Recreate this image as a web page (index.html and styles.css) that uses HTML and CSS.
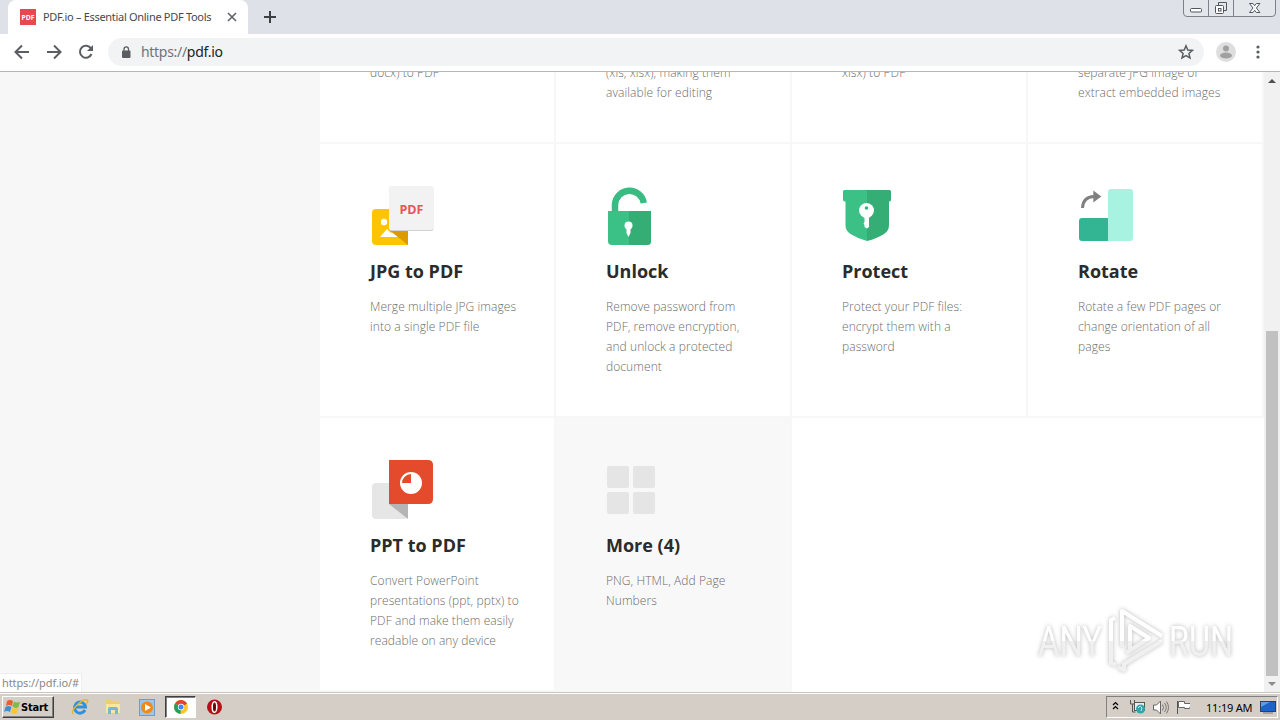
FILE: index.html
```html
<!DOCTYPE html>
<html lang="en">
<head>
    <meta charset="UTF-8">
    <meta name="viewport" content="width=device-width, initial-scale=1.0">
    <title>PDF.io – Essential Online PDF Tools</title>
    <link rel="stylesheet" href="styles.css">
</head>
<body>
    <div class="desktop">

        <!-- Tab strip -->
        <div class="tab-strip">
            <div class="tab">
                <svg class="favicon" width="16" height="16" viewBox="0 0 16 16">
                    <rect width="16" height="16" fill="#e8484f"/>
                    <text x="8" y="11" text-anchor="middle" textLength="13" lengthAdjust="spacingAndGlyphs" class="favicon-text">PDF</text>
                </svg>
                <span class="tab-title">PDF.io – Essential Online PDF Tools</span>
                <svg class="tab-close" width="10" height="10" viewBox="0 0 10 10"><path d="M1 1l8 8M9 1l-8 8" stroke="#5f6368" stroke-width="1.6"/></svg>
            </div>
            <svg class="new-tab" width="12" height="12" viewBox="0 0 12 12"><path d="M6 0v12M0 6h12" stroke="#3c4043" stroke-width="2"/></svg>
            <svg class="window-controls" width="94" height="17" viewBox="0 0 94 17" fill="none" stroke="#7c828c">
                <path d="M.5 0v13q0 3.500 3.500 3.500h85q3.500 0 3.500-3.500v-13M25.500 0v16M50.500 0v16" fill="#e3e6eb"/>
                <g stroke="#50555e">
                    <rect x="7.500" y="8.500" width="11" height="3.500" rx="1" fill="#fff"/>
                    <path d="M35.500 5.500v-3h8v8h-3"/>
                    <rect x="32.500" y="5.500" width="8" height="8" rx="1" fill="#fff"/>
                    <rect x="35.500" y="8.500" width="2.500" height="2.500"/>
                    <path d="M66.500 3.500h3.500l1.700 2.200 1.700-2.200h3.500l-3.500 4.500 3.500 4.500h-3.500l-1.700-2.200-1.700 2.200h-3.500l3.500-4.500z" fill="#fff"/>
                </g>
            </svg>
        </div>

        <!-- Toolbar -->
        <div class="toolbar">
            <svg width="96" height="20" viewBox="0 0 96 20" fill="none" stroke="#5a5e63" stroke-width="2">
                <path d="M29 10H16M22 3.500L15.500 10l6.500 6.500"/>
                <path d="M47 10h13M54 3.500l6.500 6.500-6.500 6.500"/>
                <path d="M91 6.500A6 6 0 1 0 91.500 12"/>
                <path d="M93 3v6h-6z" fill="#5a5e63" stroke="none"/>
            </svg>
            <div class="address-bar">
                <svg width="10" height="12" viewBox="0 0 10 12"><rect x="1" y="4.500" width="8.500" height="7.500" rx="1" fill="#5a5e63"/><path d="M3 5V3.200a2.250 2.250 0 0 1 4.500 0V5" fill="none" stroke="#5a5e63" stroke-width="1.300"/></svg>
                <span class="url"><span class="scheme">https://</span>pdf.io</span>
                <svg class="star" width="16" height="16" viewBox="0 0 16 16"><path d="M8 1.800l1.800 4.200 4.600.400-3.500 3 1.100 4.500L8 11.500l-4 2.400 1.100-4.500-3.500-3 4.600-.400z" fill="none" stroke="#5a5e63" stroke-width="1.500"/></svg>
            </div>
            <svg class="avatar" width="20" height="20" viewBox="0 0 20 20"><circle cx="10" cy="10" r="10" fill="#dedede"/><circle cx="10" cy="6.500" r="3" fill="#a0a0a0"/><ellipse cx="10" cy="13.500" rx="6" ry="3" fill="#a0a0a0"/></svg>
            <svg class="menu" width="4" height="14" viewBox="0 0 4 14" fill="#5a5e63"><circle cx="2" cy="2" r="1.600"/><circle cx="2" cy="7" r="1.600"/><circle cx="2" cy="12" r="1.600"/></svg>
        </div>

        <!-- Page -->
        <div class="page">
            <div class="sidebar"></div>
            <div class="tools">
                <div class="tool tool-cut"><p>docx) to PDF</p></div>
                <div class="tool tool-cut"><p>(xls, xlsx), making them<br>available for editing</p></div>
                <div class="tool tool-cut"><p>xlsx) to PDF</p></div>
                <div class="tool tool-cut"><p>separate JPG image or<br>extract embedded images</p></div>

                <div class="tool">
                    <svg width="66" height="66" viewBox="0 0 66 66">
                        <rect x="2" y="25" width="36" height="36" rx="4" fill="#fdc400"/>
                        <path d="M30 53h8v8h-8z" fill="#fdc400"/>
                        <circle cx="14" cy="38" r="3.200" fill="#fff"/>
                        <path d="M10 53l7-8 4 4 3-2 7 6z" fill="#fff"/>
                        <path d="M19 46h19v15z" fill="#dc9a00"/>
                        <rect x="19.300" y="2.500" width="44" height="44.500" rx="2" fill="#d2d2d2"/>
                        <rect x="19" y="2" width="44" height="44" rx="2" fill="#f2f2f2"/>
                        <text x="41.500" y="30" text-anchor="middle" textLength="24" lengthAdjust="spacingAndGlyphs" class="icon-text">PDF</text>
                    </svg>
                    <h2>JPG to PDF</h2>
                    <p>Merge multiple JPG images<br>into a single PDF file</p>
                </div>
                <div class="tool">
                    <svg width="66" height="66" viewBox="0 0 66 66">
                        <path d="M9 28V20.500A14.500 14.500 0 0 1 37.800 19" fill="none" stroke="#3abb83" stroke-width="6.500"/>
                        <path d="M2 27h43v30q0 4-4 4H6q-4 0-4-4z" fill="#3bc086"/>
                        <path d="M23 27h22v30q0 4-4 4H23z" fill="#35ae76"/>
                        <circle cx="22.500" cy="41.500" r="4" fill="#fff"/>
                        <path d="M20.500 43h4v6l-2 4-2-4z" fill="#fff"/>
                    </svg>
                    <h2>Unlock</h2>
                    <p>Remove password from<br>PDF, remove encryption,<br>and unlock a protected<br>document</p>
                </div>
                <div class="tool">
                    <svg width="66" height="66" viewBox="0 0 66 66">
                        <path d="M25 6H2.500Q1 6 1 7.500V16q0 1.500 2.500 1.500V41q0 6 5 9 7 4.500 16.500 7z" fill="#3bc086"/>
                        <path d="M25 6h22.500q1.500 0 1.500 1.500V16q0 1.500-2 1.500V41q0 6-5 9-7 4.500-17 7z" fill="#35ae76"/>
                        <path d="M22.500 32h4.500v11l-2 1.500-2.500-1.500v-2l-1-1.500 1-1.500z" fill="#fff"/>
                        <circle cx="24.500" cy="26.500" r="7.500" fill="#fff"/>
                        <circle cx="24.500" cy="24" r="1.800" fill="#37b57c"/>
                    </svg>
                    <h2>Protect</h2>
                    <p>Protect your PDF files:<br>encrypt them with a<br>password</p>
                </div>
                <div class="tool">
                    <svg width="66" height="66" viewBox="0 0 66 66">
                        <rect x="1" y="34" width="31" height="23" rx="3" fill="#33b593"/>
                        <path d="M30 8q0-3 3-3h19q3 0 3 3v46q0 3-3 3H30z" fill="#a7f2e1"/>
                        <path d="M4.500 24Q5 13 16 12.500" fill="none" stroke="#808080" stroke-width="3"/>
                        <path d="M15.300 6.500l8 6-8 6z" fill="#808080"/>
                    </svg>
                    <h2>Rotate</h2>
                    <p>Rotate a few PDF pages or<br>change orientation of all<br>pages</p>
                </div>

                <div class="tool">
                    <svg width="66" height="66" viewBox="0 0 66 66">
                        <rect x="2" y="25" width="36" height="36" rx="4" fill="#e6e6e6"/>
                        <path d="M19 46h19v15z" fill="#b5b5b5"/>
                        <path d="M19 2h39q5 0 5 5v34q0 5-5 5H19z" fill="#e44b2c"/>
                        <circle cx="41" cy="25" r="11" fill="#fff"/>
                        <path d="M41 25v-9a9 9 0 0 0-9 9z" fill="#e44b2c"/>
                    </svg>
                    <h2>PPT to PDF</h2>
                    <p>Convert PowerPoint<br>presentations (ppt, pptx) to<br>PDF and make them easily<br>readable on any device</p>
                </div>
                <div class="tool tool-more">
                    <svg width="66" height="66" viewBox="0 0 66 66" fill="#e5e5e5">
                        <rect x="1" y="8" width="22" height="22" rx="2"/>
                        <rect x="27" y="8" width="22" height="22" rx="2"/>
                        <rect x="1" y="34" width="22" height="22" rx="2"/>
                        <rect x="27" y="34" width="22" height="22" rx="2"/>
                    </svg>
                    <h2>More (4)</h2>
                    <p>PNG, HTML, Add Page<br>Numbers</p>
                </div>
            </div>
            <div class="scrollbar">
                <svg width="8" height="4" viewBox="0 0 8 4"><path d="M0 4l4-4 4 4z" fill="#505050"/></svg>
                <div class="thumb"></div>
                <svg width="8" height="4" viewBox="0 0 8 4"><path d="M0 0l4 4 4-4z" fill="#8a8a8a"/></svg>
            </div>
            <div class="status">https://pdf.io/#</div>
            <svg class="watermark" width="204" height="70" viewBox="0 0 204 70">
                <defs>
                    <linearGradient id="shade" gradientUnits="userSpaceOnUse" x1="0" y1="0" x2="0" y2="70">
                        <stop offset=".5" stop-color="#fff"/>
                        <stop offset=".5" stop-color="#f0f0f0"/>
                    </linearGradient>
                </defs>
                <text x="6" y="50" textLength="64" lengthAdjust="spacingAndGlyphs">ANY</text>
                <text x="137" y="50" textLength="64" lengthAdjust="spacingAndGlyphs">RUN</text>
                <g fill="none" stroke="url(#shade)" stroke-width="4" stroke-linejoin="round">
                    <path d="M90 41V5l40 25"/>
                    <path d="M98 43V20l19 12-23 15"/>
                    <path d="M83 12l-4 2v43l5 2M130 35L92 58v6l-6-3"/>
                </g>
            </svg>
        </div>

        <!-- Taskbar -->
        <div class="taskbar">
            <div class="start">
                <svg width="17" height="16" viewBox="0 0 17 16">
                    <path d="M3 2q3-2 6 0L8 7Q5 5 2 7z" fill="#e8622c"/>
                    <path d="M10 2.500q3 2 6 0L14.500 8q-3 2-6-.500z" fill="#7dbb42"/>
                    <path d="M1.500 8q3-2 6 0l-1.500 5q-3-2-6 0z" fill="#3f8fd6"/>
                    <path d="M8.500 8.500q3 2 6 0L13 14q-3 2-6-.500z" fill="#f8c62f"/>
                </svg>
                <span>Start</span>
            </div>
            <svg class="ie" width="18" height="18" viewBox="0 0 18 18">
                <path d="M14 12a5.500 5.500 0 1 1 .500-3H5" fill="none" stroke="#2f91dc" stroke-width="3"/>
                <path d="M2 16C-1 12 12 0 16 2q2 1-1 4" fill="none" stroke="#e6b52c" stroke-width="1.400"/>
            </svg>
            <svg class="folder" width="18" height="18" viewBox="0 0 18 18">
                <path d="M2 2h6l1 1h6v12H2z" fill="#efcf68"/>
                <path d="M2 6h14v9H2z" fill="#f8e7a0"/>
                <path d="M4 16v-5q0-2 2-2h6q2 0 2 2v5h-3v-4H7v4z" fill="#74b7df"/>
            </svg>
            <svg class="player" width="16" height="17" viewBox="0 0 16 17">
                <rect x=".5" y=".5" width="15" height="16" fill="#9bc6ea" stroke="#6a9ecb"/>
                <circle cx="8" cy="8.500" r="6" fill="#f0881c"/>
                <path d="M6 5l6 3.500L6 12z" fill="#fff"/>
            </svg>
            <div class="task-active">
                <svg width="14" height="14" viewBox="0 0 14 14">
                    <circle cx="7" cy="7" r="7" fill="#fbc62f"/>
                    <path d="M7 7L1 3.500a7 7 0 0 1 12 0z" fill="#dc4437"/>
                    <path d="M7 7L1 3.500A7 7 0 0 0 6.500 14z" fill="#1fa05e"/>
                    <path d="M7 3.500h6L7 7z" fill="#dc4437"/>
                    <circle cx="7" cy="7" r="3.200" fill="#fff"/>
                    <circle cx="7" cy="7" r="2.500" fill="#4285f4"/>
                </svg>
            </div>
            <svg class="opera" width="15" height="16" viewBox="0 0 15 16">
                <circle cx="7.500" cy="8" r="7.500" fill="#b31219"/>
                <ellipse cx="7.500" cy="8" rx="2.300" ry="5.300" fill="#6d070b" stroke="#fff" stroke-width="1.500"/>
            </svg>
            <div class="tray">
                <svg width="78" height="18" viewBox="0 0 78 18" fill="none">
                    <path d="M1 7l2.500-2.500L6 7M1 11l2.500-2.500L6 11" stroke="#000" stroke-width="1.200"/>
                    <path d="M18.500 2v4h4V2M20.500 6v8h3" stroke="#555"/>
                    <rect x="22.500" y="4.500" width="10" height="8" fill="#e8edf0" stroke="#555"/>
                    <circle cx="28.500" cy="11" r="4.500" fill="#32a5ac"/>
                    <path d="M26 10l2-2 2 2-1 3" stroke="#b8ebe8"/>
                    <path d="M41.500 7v5h3l4 4V3l-4 4z" fill="#fff" stroke="#666"/>
                    <path d="M50.500 6.500q2 3 0 6M52.500 5q3.500 4.500 0 9M54.500 3.500q4 6 0 12" stroke="#777"/>
                    <path d="M65.500 3v13" stroke="#555"/>
                    <path d="M66.500 3.500h6v2h7l-2 5h-5v-1h-6z" fill="#fff" stroke="#666"/>
                </svg>
                <span class="clock">11:19 AM</span>
                <svg width="16" height="13" viewBox="0 0 16 13"><rect x=".5" y=".5" width="15" height="10" fill="#1e62cc" stroke="#333f55"/><path d="M1 1h9L1 6z" fill="#5b9bec"/><path d="M3 12h10" stroke="#777"/></svg>
            </div>
        </div>
    </div>
</body>
</html>
```
FILE: styles.css
```css
body {
    margin: 0;
    font-family: "Open Sans", sans-serif;
    background-color: #fff;
}
svg {
    display: block;
    flex-shrink: 0;
}
.desktop {
    display: flex;
    flex-direction: column;
    width: 1280px;
    height: 720px;
    overflow: hidden;
}

/* Tab strip */
.tab-strip {
    display: flex;
    height: 34px;
    background-color: #dee1e8;
}
.tab {
    display: flex;
    align-items: center;
    box-sizing: border-box;
    width: 240px;
    margin-left: 8px;
    padding-left: 12px;
    background-color: #fff;
    border-radius: 8px 8px 0 0;
}
.favicon-text {
    font: bold 7.5px "Open Sans", sans-serif;
    fill: #fff;
}
.tab-title {
    width: 169px;
    margin-left: 7px;
    padding-bottom: 1px;
    font-family: "Noto Sans", sans-serif;
    font-size: 11px;
    letter-spacing: -0.3px;
    white-space: nowrap;
    color: #45494d;
}
.tab-close {
    margin-left: 15px;
}
.new-tab {
    margin: 11px 0 0 16px;
}
.window-controls {
    margin-left: auto;
    margin-right: 3px;
}

/* Toolbar */
.toolbar {
    display: flex;
    align-items: center;
    box-sizing: border-box;
    height: 38px;
    padding-bottom: 1px;
    border-bottom: 1px solid #b3b6b6;
}
.address-bar {
    display: flex;
    align-items: center;
    box-sizing: border-box;
    width: 1096px;
    height: 28px;
    margin-left: 12px;
    padding: 0 10px 0 13px;
    border-radius: 14px;
    background-color: #f1f3f4;
}
.url {
    margin-left: 10px;
    padding-bottom: 1px;
    font-family: "Noto Sans", sans-serif;
    font-size: 14px;
    letter-spacing: -0.3px;
    color: #202124;
}
.scheme {
    color: #6f7479;
}
.star {
    margin-left: auto;
}
.avatar {
    margin-left: 12px;
}
.menu {
    margin-left: 20px;
}

/* Page */
.page {
    position: relative;
    display: flex;
    height: 620px;
    overflow: hidden;
}
.sidebar {
    width: 320px;
    background-color: #f7f7f7;
}
.tools {
    display: grid;
    grid-template-columns: repeat(4, 236px);
    grid-template-rows: 72px 274px 274px;
}
.tool {
    box-sizing: border-box;
    padding: 40px 0 0 50px;
    border-right: 2px solid #f7f7f7;
    border-bottom: 2px solid #f7f7f7;
}
/* first row is scrolled partly out of view */
.tool-cut {
    padding-top: 0;
}
.tool-cut p {
    margin-top: -9px;
}
.tool-more {
    background-color: #f8f8f8;
}
.tool h2 {
    margin: 8px 0 0;
    font-size: 18px;
    line-height: 26px;
    font-weight: 700;
    color: #2b2b2b;
}
.tool p {
    margin-bottom: 0;
    font-size: 12px;
    font-weight: 300;
    line-height: 20px;
    letter-spacing: 0.08px;
    white-space: nowrap;
    color: #6c6c6c;
}
.tool h2 + p {
    margin-top: 13px;
}
.icon-text {
    font: bold 12px "Open Sans", sans-serif;
    fill: #e5555a;
}
.scrollbar {
    display: flex;
    flex-direction: column;
    align-items: center;
    box-sizing: border-box;
    width: 16px;
    padding: 7px 0 6px;
    background-color: #f1f1f1;
}
.thumb {
    width: 12px;
    height: 345px;
    margin-top: auto;
    margin-bottom: 6px;
    background-color: #c1c1c1;
}
.status {
    position: absolute;
    left: 0;
    bottom: 0;
    width: 79px;
    height: 18px;
    padding-left: 2px;
    background-color: #fff;
    border-top: 1px solid #eee;
    border-right: 1px solid #eee;
    font-family: "Noto Sans", sans-serif;
    font-size: 11px;
    line-height: 17px;
    letter-spacing: -0.1px;
    color: #888;
}
.watermark {
    position: absolute;
    left: 1032px;
    top: 534px;
    filter: drop-shadow(0 0 2px rgba(0, 0, 0, 0.28));
}
.watermark text {
    font: 42px Roboto, sans-serif;
    fill: url(#shade);
}

/* Taskbar */
.taskbar {
    display: flex;
    align-items: center;
    box-sizing: border-box;
    height: 28px;
    padding-top: 1px;
    border-top: 1px solid #c9c5bd;
    background-color: #d5cec6;
    box-shadow: inset 0 1px #fff;
}
.start {
    display: flex;
    align-items: center;
    box-sizing: border-box;
    width: 52px;
    height: 22px;
    margin-left: 2px;
    padding-left: 1px;
    border: 1px solid;
    border-color: #fff #404040 #404040 #fff;
    box-shadow: inset -1px -1px #808080;
    font-family: "DejaVu Sans Condensed", "DejaVu Sans", sans-serif;
    font-size: 11px;
    font-weight: bold;
    letter-spacing: -0.2px;
}
.ie {
    margin-left: 17px;
}
.folder {
    margin-left: 15px;
}
.player {
    margin-left: 17px;
}
.task-active {
    display: flex;
    align-items: center;
    justify-content: center;
    box-sizing: border-box;
    width: 31px;
    height: 22px;
    margin-left: 10px;
    border: 1px solid;
    border-color: #404040 #fff #fff #404040;
    box-shadow: inset 1px 1px #808080;
    background-color: #fff;
}
.opera {
    margin-left: 11px;
}
.tray {
    display: flex;
    align-items: center;
    box-sizing: border-box;
    width: 172px;
    height: 22px;
    margin-left: auto;
    margin-right: 2px;
    padding-left: 5px;
    border: 1px solid;
    border-color: #808080 #fff #fff #808080;
}
.clock {
    width: 48px;
    margin: 0 6px 0 16px;
    font-family: "Noto Sans", sans-serif;
    font-size: 11px;
    letter-spacing: -0.2px;
    white-space: nowrap;
}
```
